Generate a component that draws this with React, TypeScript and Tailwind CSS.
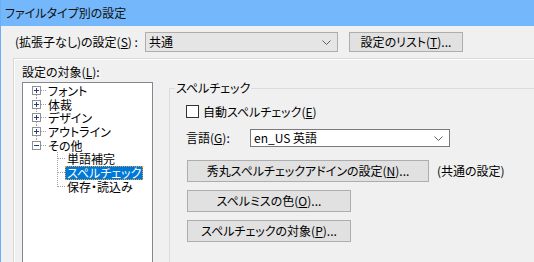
import React from "react";

const FONT = "font-['Meiryo_UI','Noto_Sans_CJK_JP',sans-serif] [font-feature-settings:'palt']";

type Row = { label: string; level: 0 | 1; pos: "first" | "mid" | "last"; selected?: boolean; expanded?: boolean };

const ROWS: Row[] = [
  { label: "フォント", level: 0, pos: "first" },
  { label: "体裁", level: 0, pos: "mid" },
  { label: "デザイン", level: 0, pos: "mid" },
  { label: "アウトライン", level: 0, pos: "mid" },
  { label: "その他", level: 0, pos: "last", expanded: true },
  { label: "単語補完", level: 1, pos: "mid" },
  { label: "スペルチェック", level: 1, pos: "mid", selected: true },
  { label: "保存・読込み", level: 1, pos: "last" },
];

const DOT = { stroke: "#a0a0a0", strokeWidth: 1, strokeDasharray: "1 1" };

function Connector({ row }: { row: Row }) {
  const cy = 6.5;
  if (row.level === 0) {
    return (
      <svg width="23" height="14" className="shrink-0 overflow-visible" shapeRendering="crispEdges">
        {row.pos !== "first" && <line x1="13.5" y1="0" x2="13.5" y2="2" {...DOT} />}
        {row.pos !== "last" && <line x1="13.5" y1="11" x2="13.5" y2="14" {...DOT} />}
        <line x1="18" y1={cy} x2="23" y2={cy} {...DOT} />
        <rect x="9.5" y="2.5" width="8" height="8" fill="#fff" stroke="#919191" />
        <line x1="11" y1={cy} x2="16" y2={cy} stroke="#1f3f8f" />
        {!row.expanded && <line x1="13.5" y1="4" x2="13.5" y2="9" stroke="#1f3f8f" />}
      </svg>
    );
  }
  return (
    <svg width="42" height="14" className="shrink-0 overflow-visible" shapeRendering="crispEdges">
      <line x1="34.5" y1="0" x2="34.5" y2={row.pos === "last" ? cy : 14} {...DOT} />
      <line x1="35" y1={cy} x2="42" y2={cy} {...DOT} />
    </svg>
  );
}

function Chevron() {
  return (
    <svg width="9" height="5" viewBox="0 0 9 5" className="shrink-0">
      <path d="M0.5 0.5 L4.5 4.5 L8.5 0.5" fill="none" stroke="#606060" strokeWidth="1" />
    </svg>
  );
}

function Btn({ children, className = "" }: { children: React.ReactNode; className?: string }) {
  return (
    <div
      className={`flex items-center justify-center border border-[#adadad] bg-[#e1e1e1] text-[12px] leading-none text-black ${className}`}
    >
      {children}
    </div>
  );
}

export default function App() {
  return (
    <div className={`flex h-[262px] w-[534px] flex-col overflow-hidden border-l border-[#6aaef5] bg-[#f0f0f0] text-[12px] text-black ${FONT}`}>
      {/* タイトル */}
      <div className="flex h-[26px] shrink-0 items-center bg-[#74b7fa] pl-[4px] text-[12px] text-[#111]">
        ファイルタイプ別の設定
      </div>

      {/* 設定 */}
      <div className="mt-[6px] flex h-[20px] shrink-0 items-center">
        <span className="w-[144px] pl-[14px] leading-none">
          (拡張子なし)の設定(<u>S</u>) :
        </span>
        <div className="flex h-[20px] w-[193px] items-center justify-between border border-[#adadad] bg-[#e5e5e5] pl-[3px] pr-[6px] leading-none">
          <span>共通</span>
          <Chevron />
        </div>
        <Btn className="ml-[11px] h-[20px] w-[114px]">
          設定のリスト(<u>T</u>)...
        </Btn>
      </div>

      {/* パネル */}
      <div className="ml-[12px] mt-[6px] flex flex-1 border-l border-t border-[#d9d9d9] shadow-[inset_1px_1px_0_#fff]">
        <div className="flex w-[155px] shrink-0 flex-col pl-[8px] pt-[6px]">
          <span className="h-[14px] leading-[14px]">
            設定の対象(<u>L</u>):
          </span>
          <div className="mt-[3px] h-[200px] w-[131px] border border-[#828790] bg-white pt-[1px]">
            {ROWS.map((r) => (
              <div key={r.label} className="flex h-[13.7px] items-center">
                <Connector row={r} />
                <span
                  className={`whitespace-nowrap border border-dotted px-[1px] leading-[11.6px] ${
                    r.selected ? "border-[#e8a33c] bg-[#0078d7] text-white" : "border-transparent"
                  }`}
                >
                  {r.label}
                </span>
              </div>
            ))}
          </div>
        </div>

        {/* スペルチェック */}
        <fieldset className="mt-[22px] mb-[5px] w-[380px] shrink-0 border border-r-0 border-[#dcdcdc]">
          <legend className="ml-[5px] px-[1px] text-[12px] leading-[14px]">スペルチェック</legend>
          <div className="flex flex-col pl-[16px]">
            <div className="mt-[10px] flex h-[13px] items-center gap-[4px]">
              <span className="h-[13px] w-[13px] border border-[#333] bg-white" />
              <span className="leading-none">
                自動スペルチェック(<u>E</u>)
              </span>
            </div>
            <div className="mt-[11px] flex h-[18px] items-center">
              <span className="w-[64px] leading-none">
                言語(<u>G</u>):
              </span>
              <div className="flex h-[18px] w-[200px] items-center justify-between border border-[#7a7a7a] bg-white pl-[3px] pr-[6px] leading-none">
                <span>en_US 英語</span>
                <Chevron />
              </div>
            </div>
            <div className="mt-[13px] flex items-center">
              <Btn className="ml-[1px] h-[22px] w-[242px]">
                秀丸スペルチェックアドインの設定(<u>N</u>)...
              </Btn>
              <span className="ml-[8px] leading-none">(共通の設定)</span>
            </div>
            <Btn className="ml-[1px] mt-[8px] h-[22px] w-[164px]">
              スペルミスの色(<u>O</u>)...
            </Btn>
            <Btn className="ml-[1px] mt-[8px] h-[22px] w-[164px]">
              スペルチェックの対象(<u>P</u>)...
            </Btn>
          </div>
        </fieldset>
      </div>
    </div>
  );
}
